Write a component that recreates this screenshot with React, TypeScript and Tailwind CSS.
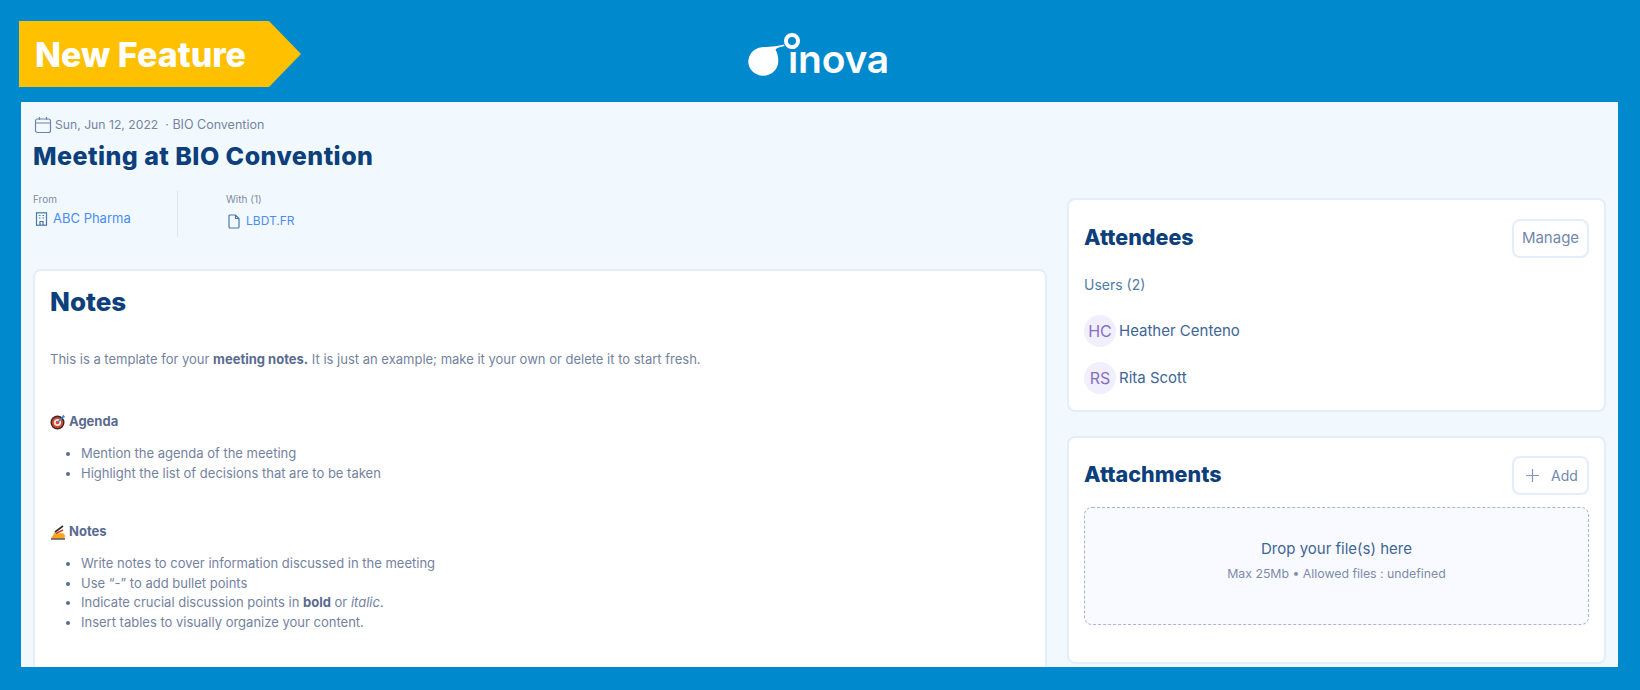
import React from "react";

const Card = ({ className = "", children }: { className?: string; children: React.ReactNode }) => (
  <div className={`rounded-[8px] border-2 border-[#E3EDFB] bg-white ${className}`}>{children}</div>
);

const Target = () => (
  <svg width="16" height="16" viewBox="0 0 16 16" className="shrink-0">
    <circle cx="7.5" cy="8.5" r="7" fill="#3a2a2a" />
    <circle cx="7.5" cy="8.5" r="5.6" fill="#d9432f" />
    <circle cx="7.5" cy="8.5" r="3.6" fill="#f4e6dc" />
    <circle cx="7.5" cy="8.5" r="1.8" fill="#d9432f" />
    <path d="M7.5 8.5 L13.5 2.5" stroke="#3b88c3" strokeWidth="1.5" />
    <path d="M12 2 L14 0.8 L14.2 2.4 L15.6 2.6 L13.8 4 Z" fill="#3b88c3" />
  </svg>
);

const Writing = () => (
  <svg width="16" height="16" viewBox="0 0 16 16" className="shrink-0">
    <path d="M1 14.5 L5 8 L8 9.5 L13 9 L15 11.5 L14.5 14.5 Z" fill="#f5a623" />
    <path d="M1 15 H15" stroke="#3a2a2a" strokeWidth="1.2" />
    <path d="M5 8 L13 2" stroke="#3a2a2a" strokeWidth="1.6" />
    <path d="M6 9.5 L13 6" stroke="#d9432f" strokeWidth="1.6" />
  </svg>
);

const Bullets = ({ items }: { items: React.ReactNode[] }) => (
  <ul className="mt-[12px] ml-[31px] list-disc text-[13px] leading-[19.6px] text-[#74829F] marker:text-[#5A6B90]">
    {items.map((it, i) => (
      <li key={i}>{it}</li>
    ))}
  </ul>
);

const Person = ({ initials, name }: { initials: string; name: string }) => (
  <div className="flex items-center gap-[3px] h-[32px]">
    <span className="w-[32px] h-[32px] rounded-full bg-[#F1EEFD] text-[#8670BE] text-[16px] flex items-center justify-center">{initials}</span>
    <span className="text-[15px] text-[#3D6595]">{name}</span>
  </div>
);

export default function App() {
  return (
    <div className="w-[1640px] h-[690px] bg-[#0089CC] overflow-hidden font-['Inter',sans-serif]">
      <header className="relative h-[102px] pt-[21px] pl-[19px]">
        <div className="w-[282px] h-[66px] bg-[#FFC000] [clip-path:polygon(0_0,250px_0,282px_50%,250px_100%,0_100%)] flex items-center pl-[16px]">
          <span className="font-extrabold text-[34px] text-white">New Feature</span>
        </div>
        <div className="absolute left-[748px] top-[30px] w-[142px] h-[50px]">
          <span className="absolute left-[40px] top-[6px] font-semibold text-[39px] leading-[46px] tracking-[-0.2px] text-white">inova</span>
          <svg width="60" height="50" viewBox="0 0 60 50" className="absolute left-0 top-0">
            <path d="M0.3 32 C0.3 25 5 18 14 17.2 C20 16.8 28 16.8 36 14.5 L36.5 16 C32 17 28.5 17.8 27.5 19.5 C29 22 30.3 26 30.3 31 C30.3 39 24 45.7 15 45.7 C7 45.7 0.3 39 0.3 32 Z" fill="#fff" />
            <circle cx="44" cy="11" r="6" fill="#0089CC" stroke="#fff" strokeWidth="4" />
          </svg>
        </div>
      </header>

      <main className="ml-[21px] w-[1597px] h-[565px] bg-[#F1F9FF] overflow-hidden pl-[12px] pt-[13px]">
        <div className="flex items-center h-[20px] text-[#76849F]">
          <svg width="18" height="18" viewBox="0 0 18 18" fill="none" stroke="#6E84AB" strokeWidth="1.2" className="ml-[1px] shrink-0">
            <rect x="1.5" y="3" width="15" height="13.5" rx="2" />
            <path d="M1.5 7 H16.5 M5.5 1 V4 M12.5 1 V4" />
          </svg>
          <span className="ml-[3px] text-[12.2px]">Sun, Jun 12, 2022</span>
          <span className="ml-[7px] text-[12.5px]">· BIO Convention</span>
        </div>
        <h1 className="mt-[5px] h-[32px] text-[25px] leading-[32px] font-extrabold text-[#0C3F7C] tracking-[0.45px]">Meeting at BIO Convention</h1>

        <div className="flex mt-[19px]">
          <div className="w-[1014px] shrink-0">
            <div className="flex h-[46px] mb-[32px]">
              <div className="w-[145px] border-r border-[#DDE7F3] h-[46px]">
                <div className="text-[10px] leading-[14px] mt-[1px] text-[#808BA3]">From</div>
                <div className="flex items-center gap-[5px] mt-[3px]">
                  <svg width="13" height="14" viewBox="0 0 13 14" fill="none" stroke="#4C77A8" strokeWidth="1.2" className="ml-[2px]">
                    <rect x="1.5" y="0.8" width="10" height="12.4" />
                    <path d="M4 3.5H5.5M7.5 3.5H9M4 6H5.5M7.5 6H9M5 13V9.5H8V13" />
                  </svg>
                  <span className="text-[13px] text-[#4A8BF5]">ABC Pharma</span>
                </div>
              </div>
              <div className="pl-[48px]">
                <div className="text-[10px] leading-[14px] mt-[1px] text-[#808BA3]">With (1)</div>
                <div className="flex items-center gap-[6px] mt-[6px]">
                  <svg width="12" height="15" viewBox="0 0 12 15" fill="none" stroke="#4C77A8" strokeWidth="1.2" className="ml-[2px]">
                    <path d="M1 2 A1 1 0 0 1 2 1 H7.5 L11 4.5 V13 A1 1 0 0 1 10 14 H2 A1 1 0 0 1 1 13 Z M7.5 1 V4.5 H11" />
                  </svg>
                  <span className="text-[12px] text-[#4A8BF5]">LBDT.FR</span>
                </div>
              </div>
            </div>

            <Card className="h-[420px] pl-[15px] pt-[15px]">
              <h2 className="text-[26px] leading-[32px] font-extrabold text-[#0C3F7C]">Notes</h2>
              <p className="mt-[31px] text-[13px] leading-[20px] text-[#74829F]">
                This is a template for your <strong className="font-bold text-[#5A6B90]">meeting notes.</strong> It is just an example; make it your own or delete it to start fresh.
              </p>
              <div className="mt-[43px] flex items-center gap-[3px] h-[20px]">
                <Target />
                <span className="text-[13px] font-bold text-[#5A6B90]">Agenda</span>
              </div>
              <Bullets items={["Mention the agenda of the meeting", "Highlight the list of decisions that are to be taken"]} />
              <div className="mt-[39px] flex items-center gap-[3px] h-[20px]">
                <Writing />
                <span className="text-[13px] font-bold text-[#5A6B90]">Notes</span>
              </div>
              <Bullets
                items={[
                  "Write notes to cover information discussed in the meeting",
                  "Use “-” to add bullet points",
                  <>Indicate crucial discussion points in <strong className="font-bold text-[#5A6B90]">bold</strong> or <em>italic</em>.</>,
                  "Insert tables to visually organize your content.",
                ]}
              />
            </Card>
          </div>

          <div className="ml-[20px] w-[539px] shrink-0 mt-[7px] flex flex-col gap-[24px]">
            <Card className="h-[214px] pl-[15px] pr-[15px] pt-[19px]">
              <div className="flex items-center justify-between h-[39px]">
                <h3 className="text-[21.5px] font-extrabold text-[#0C3F7C] pb-[2px]">Attendees</h3>
                <button className="w-[77px] h-[39px] rounded-[8px] border-2 border-[#E3EDFB] text-[15px] text-[#7287AC]">Manage</button>
              </div>
              <div className="mt-[17px] text-[14px] leading-[20px] text-[#4F7BA8]">Users (2)</div>
              <div className="mt-[20px] flex flex-col gap-[15px]">
                <Person initials="HC" name="Heather Centeno" />
                <Person initials="RS" name="Rita Scott" />
              </div>
            </Card>
            <Card className="h-[228px] pl-[15px] pr-[15px] pt-[18px]">
              <div className="flex items-center justify-between h-[39px]">
                <h3 className="text-[21.5px] font-extrabold text-[#0C3F7C] pb-[2px]">Attachments</h3>
                <button className="w-[77px] h-[39px] rounded-[8px] border-2 border-[#E3EDFB] text-[14px] text-[#7287AC] flex items-center pl-[11px] gap-[11px]">
                  <svg width="15" height="15" viewBox="0 0 15 15" stroke="#8497B8" strokeWidth="1.2"><path d="M7.5 1V14M1 7.5H14" /></svg>
                  Add
                </button>
              </div>
              <div className="mt-[12px] h-[118px] rounded-[8px] border border-dashed border-[#A9B6CF] bg-[#F9FAFF] flex flex-col items-center pt-[30px]">
                <div className="text-[15px] leading-[22px] text-[#3D6595]">Drop your file(s) here</div>
                <div className="mt-[6px] text-[12.3px] leading-[16px] text-[#7C8CAB]">Max 25Mb • Allowed files : undefined</div>
              </div>
            </Card>
          </div>
        </div>
      </main>
    </div>
  );
}
